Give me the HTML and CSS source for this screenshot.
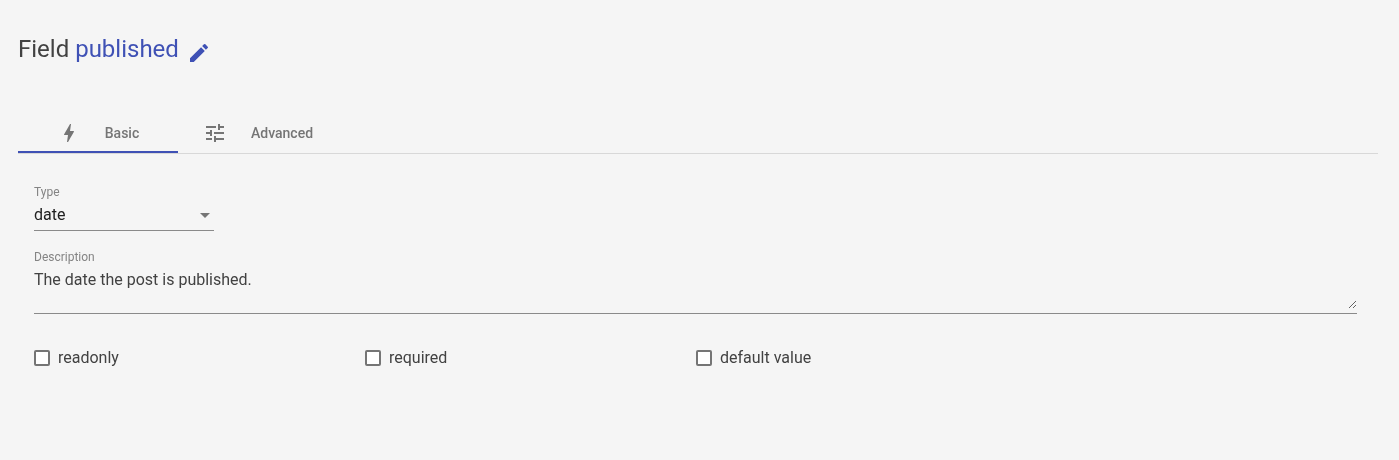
FILE: index.html
```html
<!DOCTYPE html>
<html lang="en">
<head>
<meta charset="utf-8">
<title>Field published</title>
<link rel="stylesheet" href="styles.css">
</head>
<body>
<main class="page">
  <h1 class="title"><span>Field <span class="name">published</span></span>
    <svg class="edit" viewBox="0 0 24 24"><path d="M3 17.25V21h3.75L17.81 9.94l-3.75-3.75L3 17.25zM20.71 7.04a.996.996 0 0 0 0-1.41l-2.34-2.34a.996.996 0 0 0-1.41 0l-1.83 1.83 3.75 3.75 1.83-1.83z"/></svg>
  </h1>
  <nav class="tabs">
    <div class="tab tab-active">
      <svg class="tab-icon" viewBox="0 0 24 24"><path d="M11 21h-1l1-7H7.500c-.88 0-.33-.75-.31-.78C8.480 10.940 10.420 7.540 13.010 3h1l-1 7h3.510c.4 0 .62.190.4.660C12.970 17.550 11 21 11 21z"/></svg>
      <span>Basic</span>
    </div>
    <div class="tab">
      <svg class="tab-icon" viewBox="0 0 24 24"><path d="M3 17v2h6v-2H3zM3 5v2h10V5H3zm10 16v-2h8v-2h-8v-2h-2v6h2zM7 9v2H3v2h4v2h2V9H7zm14 4v-2H11v2h10zm-6-4h2V7h4V5h-4V3h-2v6z"/></svg>
      <span>Advanced</span>
    </div>
  </nav>
  <section class="panel">
    <div class="field type-field">
      <span class="label">Type</span>
      <div class="select"><span>date</span><i class="arrow"></i></div>
    </div>
    <div class="field description-field">
      <label class="label" for="description">Description</label>
      <textarea class="textarea" id="description">The date the post is published.</textarea>
    </div>
    <div class="checks">
      <div class="check"><i class="box"></i><span>readonly</span></div>
      <div class="check"><i class="box"></i><span>required</span></div>
      <div class="check"><i class="box"></i><span>default value</span></div>
    </div>
  </section>
</main>
</body>
</html>
```

FILE: styles.css
```css
* { box-sizing: border-box; }
body {
  margin: 0;
  background: #f5f5f5;
  color: #424242;
  font-family: Roboto, sans-serif;
  font-size: 16px;
}
.page { padding: 33px 21px 0 18px; will-change: transform; }
.title {
  display: flex;
  gap: 8px;
  height: 32px;
  margin: 0;
  font-size: 24px;
  font-weight: 400;
  line-height: 32px;
}
.name { color: #3f51b5; }
.edit { width: 24px; height: 24px; margin-top: 8px; fill: #3f51b5; }
.tabs {
  display: flex;
  height: 49px;
  margin-top: 40px;
  border-bottom: 1px solid #d8d8d8;
}
.tab {
  display: flex;
  align-items: center;
  justify-content: center;
  gap: 24px;
  width: 160px;
  height: 48px;
  padding-top: 8px;
  color: #757575;
  font-size: 14px;
  font-weight: 500;
}
.tab-active { padding-top: 10px; border-bottom: 2px solid #3f51b5; }
.tab-icon { width: 24px; height: 24px; fill: #757575; }
.panel { padding: 31px 0 0 16px; }
.field { display: flex; flex-direction: column; border-bottom: 1px solid #8a8a8a; }
.label { font-size: 12px; line-height: 14px; color: #848484; }
.type-field { width: 180px; height: 46px; }
.select {
  display: flex;
  align-items: center;
  justify-content: space-between;
  height: 18px;
  margin-top: 6px;
  padding-right: 4px;
  color: #212121;
}
.arrow {
  margin-top: 3px;
  border: 5px solid transparent;
  border-top-color: #757575;
  border-bottom: 0;
}
.description-field { width: 1323px; height: 64px; margin-top: 19px; }
.textarea {
  width: 100%;
  height: 38px;
  margin: 7px 0 0;
  padding: 0;
  border: 0;
  outline: 0;
  background: transparent;
  color: inherit;
  font: 16px/18px Roboto, sans-serif;
  resize: vertical;
  overflow: auto;
}
.checks { display: flex; margin-top: 34px; }
.check { display: flex; align-items: center; gap: 8px; width: 331px; height: 20px; }
.check span { padding-bottom: 2px; }
.box { width: 16px; height: 16px; border: 2px solid #757575; border-radius: 2px; background: #fff; }
```
